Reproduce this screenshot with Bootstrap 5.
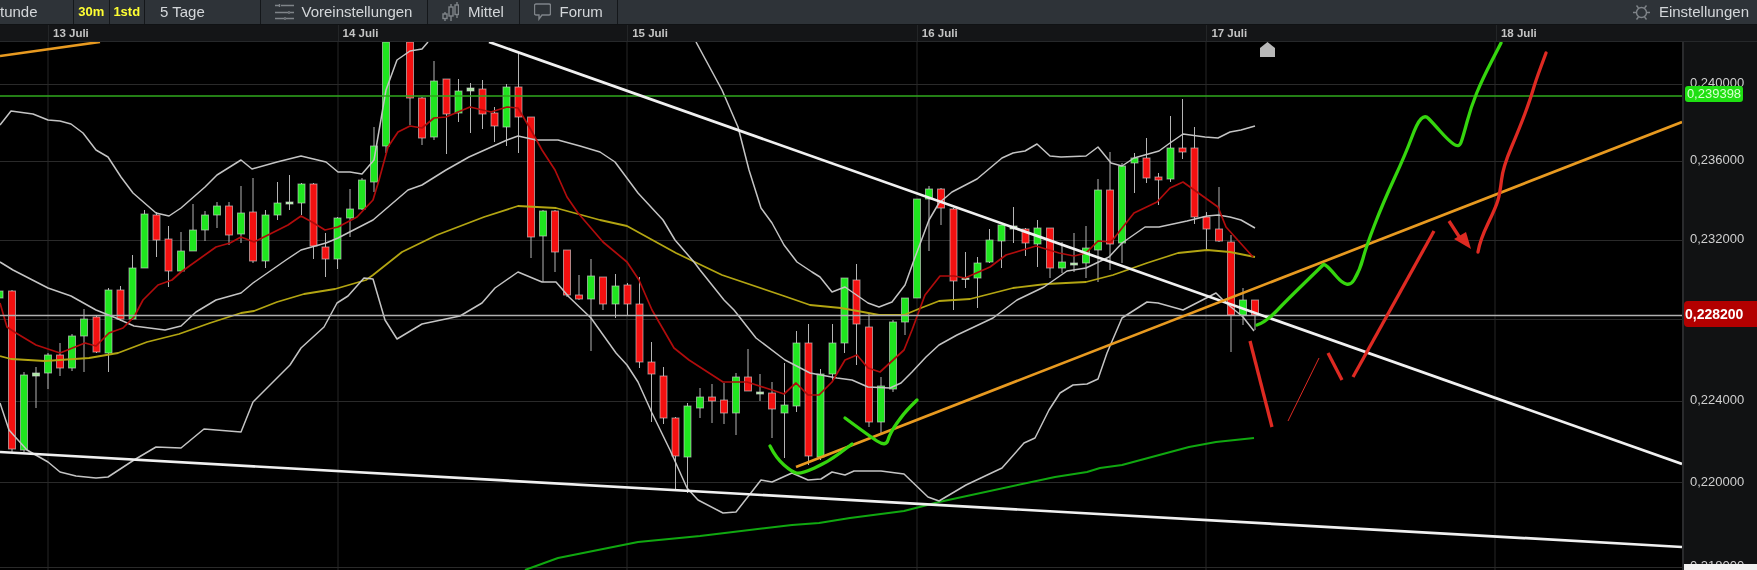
<!DOCTYPE html>
<html lang="de">
<head>
<meta charset="utf-8">
<title>Chart</title>
<link href="https://cdn.jsdelivr.net/npm/bootstrap@5.3.0/dist/css/bootstrap.min.css" rel="stylesheet">
<style>
html,body{margin:0;height:570px;overflow:hidden;background:#000;font-family:"Liberation Sans",Arial,sans-serif}
.tbar{height:25px;background:#2e3338;border-bottom:1px solid #101214;color:#d4d7da;font-size:15px;line-height:24px;overflow:hidden;filter:blur(.25px)}
.tb-item{height:24px;border-right:1px solid #14171a;flex:none;white-space:nowrap;overflow:hidden}
.tb-tf{width:74px}.tb-tf span{margin-left:-10px}
.tb-sm{width:35.5px;justify-content:center;color:#ffff33;font-weight:700;font-size:13px}
.tb-days{width:115.5px;padding-left:15px}
.tb-pre{width:167.5px;padding-left:14px;gap:8px}
.tb-avg{width:91.5px;padding-left:14px;gap:9px}
.tb-for{width:98px;padding-left:14px;gap:9px}
.tb-set{margin-left:auto;padding-right:8px;gap:9px;height:24px}
.tb-ico{flex:none;fill:none;stroke:#7f8489;stroke-width:1.4}
.dbar{height:17px;background:#141517;border-bottom:1px solid #26282a;padding-left:48px;color:#c4c4c4;font-size:11.5px;font-weight:700;line-height:16px;filter:blur(.25px)}
.dtick{width:289.6px;flex:none;padding-left:4px;border-left:1px solid #232527}
.cframe{height:528px}
.csvg{display:block;flex:none;width:1682px;height:528px;filter:blur(.35px)}
.paxis{position:relative;flex:1;background:#111213;border-left:2px solid #2a2b2d;overflow:hidden;color:#cfcfcf;font-size:13px;filter:blur(.25px)}
.plabel{position:absolute;left:6px;line-height:14px}
.ptag{position:absolute;font-weight:400;white-space:nowrap}
.ptag-g{left:1px;width:58px;height:16px;top:44px;line-height:16px;background:#1fe012;color:#d9ffd0;border-radius:3px;text-align:center;font-size:13px}
.ptag-r{left:0;right:0;height:26px;top:259px;line-height:26px;background:#b30000;color:#fff;border-radius:4px 0 0 4px;padding-left:1px;font-weight:700;font-size:14px}
.pfoot{position:absolute;left:0;right:0;bottom:0;height:6px;background:#f1f1f1}
</style>
</head>
<body>
<nav class="tbar d-flex">
  <div class="tb-item tb-tf d-flex align-items-center"><span>Stunde</span></div>
  <div class="tb-item tb-sm d-flex align-items-center">30m</div>
  <div class="tb-item tb-sm d-flex align-items-center">1std</div>
  <div class="tb-item tb-days d-flex align-items-center">5 Tage</div>
  <div class="tb-item tb-pre d-flex align-items-center">
    <svg class="tb-ico" width="19" height="20" viewBox="0 0 19 20"><path d="M0 3.5h4M6 3.5h13M4.500 2v3M0 10.500h13M15 10.500h4M14 9v3M0 16.500h9M11 16.500h8M10 15v3"/></svg>
    <span>Voreinstellungen</span></div>
  <div class="tb-item tb-avg d-flex align-items-center">
    <svg class="tb-ico" width="17" height="20" viewBox="0 0 17 20"><path d="M3 10v2M3 17v2M9 2v3M9 14v5M15 0v3M15 13v3"/><rect x="1" y="12" width="4" height="4.500"/><rect x="7" y="5" width="4" height="9"/><rect x="13" y="3" width="3.500" height="9.500"/></svg>
    <span>Mittel</span></div>
  <div class="tb-item tb-for d-flex align-items-center">
    <svg class="tb-ico" width="17" height="18" viewBox="0 0 17 18"><path d="M2 1h13a1.500 1.500 0 0 1 1.500 1.500v8a1.500 1.500 0 0 1-1.500 1.500H8l-3 4v-4H2a1.500 1.500 0 0 1-1.500-1.500v-8A1.500 1.500 0 0 1 2 1z"/></svg>
    <span>Forum</span></div>
  <div class="tb-set d-flex align-items-center">
    <svg class="tb-ico" width="17" height="17" viewBox="0 0 17 17"><circle cx="8.500" cy="8.500" r="5"/><path d="M0 8.500h3M14 8.500h3M3.500 1.500l2 2.500M13.500 1.500l-2 2.500M3.500 15.500l2-2.500M13.500 15.500l-2-2.500"/></svg>
    <span>Einstellungen</span></div>
</nav>
<div class="dbar d-flex">
  <div class="dtick">13 Juli</div><div class="dtick">14 Juli</div><div class="dtick">15 Juli</div><div class="dtick">16 Juli</div><div class="dtick">17 Juli</div><div class="dtick">18 Juli</div>
</div>
<div class="cframe d-flex">
  <svg class="csvg" id="chart" viewBox="0 42 1682 528" xmlns="http://www.w3.org/2000/svg"></svg>
  <aside class="paxis">
    <div class="plabel" style="top:34px">0,240000</div>
    <div class="ptag ptag-g">0,239398</div>
    <div class="plabel" style="top:111px">0,236000</div>
    <div class="plabel" style="top:190px">0,232000</div>
    <div class="ptag ptag-r">0,228200</div>
    <div class="plabel" style="top:351px">0,224000</div>
    <div class="plabel" style="top:433px">0,220000</div>
    <div class="plabel" style="top:517px">0,218000</div>
    <div class="pfoot"></div>
  </aside>
</div>
<script>
var C=[[-4,'g',291,291,298,299],[-3,'r',290,291,449,452],[-2,'g',372,375,450,452],[-1,'d',367,373,376,408],[0,'g',353,355,373,389],[1,'r',343,355,368,376],[2,'g',334,336,368,371],[3,'g',309,319,336,372],[4,'r',315,317,352,353],[5,'g',288,290,353,372],[6,'r',286,290,319,321],[7,'g',255,268,319,320],[8,'g',210,214,268,268],[9,'r',212,215,240,257],[10,'r',226,239,271,287],[11,'g',232,251,271,272],[12,'g',204,230,251,251],[13,'g',211,215,230,241],[14,'g',202,206,215,228],[15,'r',202,206,235,245],[16,'g',186,213,234,243],[17,'r',178,212,261,263],[18,'g',210,215,261,268],[19,'g',182,203,215,220],[20,'d',175,202,204,210],[21,'g',183,184,203,215],[22,'r',183,184,246,259],[23,'r',233,247,259,277],[24,'g',217,218,259,269],[25,'g',189,209,218,237],[26,'g',178,180,209,210],[27,'g',127,146,182,192],[28,'g',42,42,146,153],[30,'r',42,42,98,125],[31,'r',97,98,138,145],[32,'g',61,81,137,140],[33,'r',79,79,114,154],[34,'g',79,91,113,122],[35,'d',83,88,91,133],[36,'r',80,89,114,129],[37,'r',107,113,126,142],[38,'g',84,87,127,146],[39,'r',52,87,117,153],[40,'r',117,117,237,258],[41,'g',210,211,236,282],[42,'r',210,211,252,272],[43,'r',250,250,295,297],[44,'r',275,295,299,300],[45,'g',259,276,299,351],[46,'r',277,277,304,310],[47,'g',274,286,304,318],[48,'r',283,285,304,315],[49,'r',277,304,362,368],[50,'r',342,362,374,422],[51,'r',367,376,418,424],[52,'r',417,418,456,490],[53,'g',403,406,457,493],[54,'g',388,397,408,418],[55,'r',384,397,401,423],[56,'r',383,400,413,424],[57,'g',373,377,413,435],[58,'r',349,377,391,391],[59,'d',374,392,394,401],[60,'r',382,393,409,438],[61,'g',363,405,413,458],[62,'g',331,343,406,412],[63,'r',324,343,456,465],[64,'g',369,374,457,460],[65,'g',324,343,374,380],[66,'g',278,278,343,353],[67,'r',264,280,324,365],[68,'r',313,327,422,427],[69,'g',377,386,422,433],[70,'g',320,322,389,392],[71,'g',298,298,322,335],[72,'g',199,199,298,298],[73,'g',186,189,199,251],[74,'r',188,189,208,225],[75,'r',208,209,281,310],[76,'d',252,278,279,288],[77,'g',257,263,278,308],[78,'g',229,240,262,263],[79,'g',225,225,241,268],[80,'d',207,226,229,243],[81,'r',228,229,243,256],[82,'g',220,228,244,267],[83,'r',228,228,268,278],[84,'g',242,262,268,273],[85,'d',233,263,265,272],[86,'g',226,248,263,278],[87,'g',179,190,250,282],[88,'r',152,190,244,270],[89,'g',163,166,243,263],[90,'g',153,158,163,193],[91,'r',138,158,178,183],[92,'r',173,177,180,205],[93,'g',116,148,179,182],[94,'r',99,148,152,159],[95,'r',127,148,217,224],[96,'r',212,217,229,250],[97,'r',187,229,241,242],[98,'r',235,242,315,352],[99,'g',288,300,315,325],[100,'r',300,300,315,330]];
var L={
up:[[0,125],[11,111],[33,114],[48,120],[60,121],[71,124],[83,133],[96,150],[108,157],[121,177],[133,193],[156,213],[169,216],[181,208],[205,187],[217,175],[241,160],[252,169],[277,162],[301,156],[326,162],[338,172],[350,172],[362,174],[374,160],[386,90],[397,60],[410,51],[422,49],[428,42]],
up2:[[696,42],[722,90],[738,127],[749,170],[761,208],[772,223],[784,245],[797,262],[812,272],[820,277],[832,292],[845,287],[868,303],[879,307],[892,302],[905,285],[914,260],[929,220],[939,203],[952,192],[977,179],[1002,158],[1013,153],[1025,151],[1037,144],[1050,156],[1061,157],[1086,156],[1098,147],[1111,163],[1122,166],[1134,158],[1159,151],[1170,143],[1183,134],[1205,137],[1218,138],[1230,132],[1241,130],[1255,126]],
mid:[[0,262],[13,270],[48,288],[71,296],[96,310],[116,318],[134,326],[165,330],[181,326],[196,312],[216,300],[241,293],[253,283],[286,260],[301,250],[326,243],[338,238],[373,220],[408,190],[422,185],[446,170],[469,157],[507,140],[518,136],[536,140],[558,140],[580,146],[600,152],[615,162],[638,193],[663,220],[675,240],[694,262],[700,270],[724,300],[734,310],[756,338],[785,360],[810,373],[837,378],[852,380],[868,387],[890,388],[901,383],[912,372],[926,357],[939,345],[957,335],[993,318],[1017,300],[1044,287],[1067,271],[1086,268],[1109,257],[1122,243],[1145,227],[1159,227],[1187,221],[1207,216],[1218,215],[1230,217],[1241,220],[1255,228]],
lo:[[0,403],[9,430],[27,450],[48,462],[60,472],[76,476],[96,478],[108,477],[134,460],[156,447],[181,448],[204,429],[241,432],[253,402],[290,365],[301,348],[324,327],[337,303],[348,296],[364,278],[373,279],[385,320],[397,339],[422,324],[460,316],[482,303],[495,288],[518,272],[542,282],[556,282],[569,297],[591,318],[616,353],[627,365],[638,382],[652,413],[670,450],[687,488],[698,500],[723,513],[736,512],[761,480],[772,482],[792,473],[808,480],[821,479],[832,472],[845,475],[854,471],[881,471],[904,474],[928,497],[939,501],[966,485],[1002,468],[1024,443],[1035,438],[1049,410],[1060,393],[1073,385],[1087,384],[1098,379],[1107,353],[1122,318],[1147,302],[1158,303],[1183,310],[1216,293],[1225,302],[1243,317],[1254,331]],
red:[[0,303],[7,327],[16,333],[36,345],[60,353],[85,343],[96,346],[109,333],[123,328],[134,317],[143,300],[158,285],[172,280],[181,272],[216,247],[230,243],[241,237],[254,242],[268,235],[288,225],[301,216],[312,222],[325,230],[338,227],[357,217],[373,200],[379,180],[388,147],[398,132],[410,126],[422,128],[434,118],[446,117],[470,107],[491,112],[507,107],[518,108],[531,130],[542,150],[555,170],[567,197],[578,213],[603,242],[627,262],[639,280],[652,310],[674,348],[689,360],[723,382],[747,382],[772,390],[784,394],[796,383],[808,395],[819,395],[832,382],[845,360],[857,355],[868,368],[880,372],[904,350],[912,330],[925,295],[940,276],[954,276],[965,278],[990,267],[1006,255],[1036,246],[1059,253],[1074,256],[1086,253],[1098,241],[1111,242],[1134,213],[1157,202],[1170,188],[1183,182],[1197,192],[1218,207],[1226,227],[1253,257]],
yel:[[0,356],[11,359],[45,361],[89,358],[118,353],[147,342],[179,334],[210,323],[241,313],[254,311],[277,302],[304,294],[335,289],[366,280],[373,275],[402,252],[437,235],[484,217],[518,206],[556,208],[600,220],[627,226],[676,253],[722,275],[784,296],[810,305],[841,308],[863,312],[879,315],[904,315],[921,308],[939,301],[970,299],[1013,288],[1046,284],[1086,282],[1113,275],[1147,263],[1178,253],[1207,250],[1230,252],[1255,257]],
grn:[[525,570],[558,558],[638,542],[700,536],[792,525],[819,523],[850,518],[904,511],[939,502],[1055,477],[1087,472],[1100,468],[1122,465],[1189,447],[1216,442],[1254,438]]
};
var H={
a:[[770,446],[776,458],[792,472],[801,474],[828,462],[852,444]],
b:[[845,418],[868,435],[886,447],[890,433],[904,413],[917,400]],
c:[[1257,325],[1266,322],[1287,300],[1322,266],[1325,263],[1348,290],[1360,270],[1366,247],[1383,203],[1406,153],[1417,123],[1425,115],[1432,122],[1448,140],[1459,148],[1463,137],[1471,107],[1482,80],[1501,43]],
d:[[1478,252],[1480,240],[1496,207],[1500,193],[1503,167],[1520,127],[1530,100],[1536,80],[1546,53]]
};
function pl(p){return p.map(function(a){return a.join(',')}).join(' ')}
function sm(p){var d='M'+p[0].join(' ');for(var i=1;i<p.length-1;i++){var m=[(p[i][0]+p[i+1][0])/2,(p[i][1]+p[i+1][1])/2];d+=' Q'+p[i].join(' ')+' '+m.join(' ')}var e=p[p.length-1];return d+' L'+e.join(' ')}
var s='';
[48,338,627,917,1206,1495].forEach(function(x){s+='<line x1="'+x+'" x2="'+x+'" y1="42" y2="570" stroke="#262626"/>'});
[84.500,161.500,240.500,319.500,401.500,482.500,567.500].forEach(function(y){s+='<line x1="0" x2="1682" y1="'+y+'" y2="'+y+'" stroke="#2a2a2a"/>'});
var col={g:'#1fe61f',r:'#f41010',d:'#a8e8a0'};
C.forEach(function(c){var x=48+12.07*c[0];x=Math.round(x*2)/2;
 s+='<line x1="'+x+'" x2="'+x+'" y1="'+c[2]+'" y2="'+c[5]+'" stroke="#b4b4b4" stroke-width="1"/>';
 s+='<rect x="'+(x-3.5)+'" y="'+c[3]+'" width="7" height="'+Math.max(c[4]-c[3],1.5)+'" fill="'+col[c[1]]+'" stroke="#d8d8d8" stroke-opacity=".6" stroke-width="1"/>';});
function poly(p,c,w){s+='<polyline points="'+pl(p)+'" fill="none" stroke="'+c+'" stroke-width="'+w+'" stroke-linejoin="round"/>'}
poly(L.yel,'#b3a512',1.8);poly(L.grn,'#10a810',2);poly(L.up,'#c4c4c4',1.5);poly(L.up2,'#c4c4c4',1.5);poly(L.mid,'#c4c4c4',1.5);poly(L.lo,'#c4c4c4',1.5);poly(L.red,'#b00c0c',1.7);
s+='<line x1="0" x2="1682" y1="96" y2="96" stroke="#30a81e" stroke-width="1.500"/>';
s+='<line x1="0" x2="1682" y1="315.500" y2="315.500" stroke="#b0b0b0" stroke-width="1.300"/>';
function seg(a,b,c,d,col,w){s+='<line x1="'+a+'" y1="'+b+'" x2="'+c+'" y2="'+d+'" stroke="'+col+'" stroke-width="'+w+'"/>'}
seg(489,42,1682,464,'#f0f0f0',2.7);seg(0,452,1682,547,'#f0f0f0',2.7);
seg(0,56,100,42,'#e89a20',2.7);seg(796,467,1682,122,'#e89a20',2.7);
s+='<polygon points="1260,57 1275,57 1275,48 1267.500,42 1260,48" fill="#b8b8b8"/>';
function hand(p,c,w){s+='<path d="'+sm(p)+'" fill="none" stroke="'+c+'" stroke-width="'+w+'" stroke-linecap="round" stroke-linejoin="round"/>'}
var G='#35d60e',R='#de2a22';
hand(H.a,G,3.3);hand(H.b,G,3.3);hand(H.c,G,3.3);hand(H.d,R,3.3);
seg(1250,341,1272,427,R,3.3);seg(1288,421,1319,358,R,1);seg(1328,353,1342,380,R,3.3);seg(1353,377,1434,231,R,3.3);seg(1449,221,1460,238,R,3.3);
s+='<polygon points="1454,239 1466,232 1471,249" fill="'+R+'"/>';
document.getElementById('chart').innerHTML=s;
</script>
<script src="https://cdn.jsdelivr.net/npm/bootstrap@5.3.0/dist/js/bootstrap.bundle.min.js"></script>
</body>
</html>
